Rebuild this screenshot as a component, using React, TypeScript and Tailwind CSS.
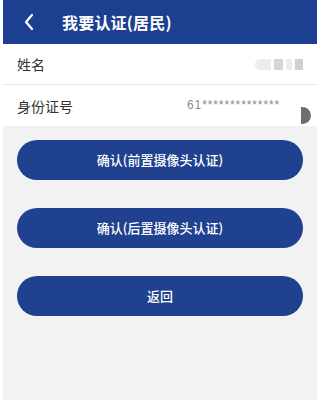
import React from 'react';

const FONT = '"Noto Sans CJK SC", "Noto Sans", sans-serif';

const Row: React.FC<{ label: string; children?: React.ReactNode; last?: boolean }> = ({ label, children, last }) => (
  <div className={`h-[41px] flex items-center justify-between pl-[14px] pr-[6px] bg-white ${last ? '' : 'border-b border-[#ececec]'}`}>
    <span className="text-[14px] text-[#333] mt-[1px]">{label}</span>
    {children}
  </div>
);

const Button: React.FC<{ text: string }> = ({ text }) => (
  <button className="w-full h-[40px] rounded-full bg-[#1f418f] text-white text-[13px] font-medium flex items-center justify-center">
    {text}
  </button>
);

export default function App() {
  return (
    <div className="w-[320px] h-[402px] bg-white px-[3px] pb-[2px]" style={{ fontFamily: FONT }}>
      <div className="h-full flex flex-col bg-[#f2f2f2]">
        {/* header */}
        <div className="h-[44px] bg-[#1d3f8f] flex items-center text-white shrink-0">
          <svg width="24" height="24" viewBox="0 0 24 24" className="ml-[14px]">
            <path d="M15 5 L9 12 L15 19" fill="none" stroke="white" strokeWidth="2.2" strokeLinecap="round" strokeLinejoin="round" />
          </svg>
          <span className="ml-[21px] text-[16px] font-bold tracking-[0.2px]">我要认证(居民)</span>
        </div>

        {/* info rows */}
        <div className="flex flex-col">
          <Row label="姓名">
            <div className="flex items-center gap-[3px] mr-[8px] mt-[1px]">
              <div className="w-[16px] h-[11px] rounded-l-full bg-[#ececec]" />
              <div className="w-[9px] h-[11px] bg-[#d6d6d6]" />
              <div className="w-[6px] h-[11px] bg-[#ececec]" />
              <div className="w-[8px] h-[11px] bg-[#cfcfcf]" />
            </div>
          </Row>
          <Row label="身份证号" last>
            <div className="flex items-start h-full relative w-[124px]">
              <span className="text-[12px] text-[#8a8a8a] mt-[11px] tracking-[0.9px]" style={{ fontFamily: '"Liberation Sans", sans-serif' }}>
                61**************
              </span>
              <div className="absolute right-0 bottom-[2px] w-[10px] h-[17px] rounded-r-full bg-[#6e6e6e]" />
            </div>
          </Row>
        </div>

        {/* actions */}
        <div className="flex flex-col gap-[28px] px-[14px] pt-[14px]">
          <Button text="确认(前置摄像头认证)" />
          <Button text="确认(后置摄像头认证)" />
          <Button text="返回" />
        </div>
      </div>
    </div>
  );
}
